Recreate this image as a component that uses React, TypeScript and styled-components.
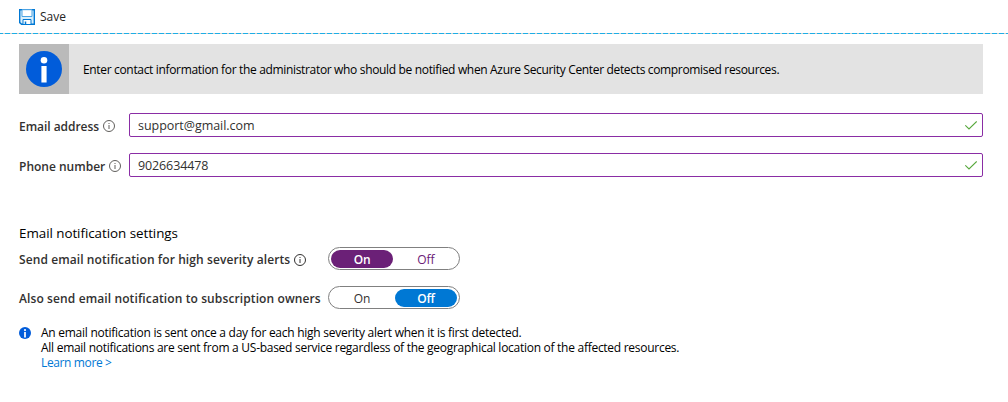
import React from 'react';
import styled, { createGlobalStyle } from 'styled-components';

const GlobalStyle = createGlobalStyle`
  body {
    margin: 0;
    background: #fff;
    color: #000;
    font-family: 'Segoe UI', 'Open Sans', 'Noto Sans', sans-serif;
    font-size: 12px;
  }
`;

const Page = styled.div`
  height: 402px;
  overflow: hidden;
`;

const Toolbar = styled.div`
  height: 33px;
  display: flex;
  align-items: center;
  gap: 5px;
  padding-left: 19px;
  box-sizing: border-box;
  color: #252525;
`;

const ToolbarRule = styled.div`
  height: 1px;
  background: repeating-linear-gradient(90deg, #1eaee6 0 3px, #d8d0cc 3px 5px, #1eaee6 5px 7px);
`;

const Content = styled.main`
  padding: 10px 25px 0 19px;
`;

const Text = styled.span<{ $spacing?: number; $size?: number }>`
  white-space: nowrap;
  font-size: ${(p) => (p.$size ? `${p.$size}px` : 'inherit')};
  letter-spacing: ${(p) => p.$spacing ?? 0}px;
`;

const Banner = styled.section`
  display: flex;
  align-items: center;
  height: 50px;
  background: #e3e3e3;
`;

const BannerIcon = styled.div`
  width: 50px;
  height: 50px;
  margin-right: 14px;
  display: flex;
  align-items: center;
  justify-content: center;
  background: #bababa;
`;

const Fields = styled.div`
  display: grid;
  gap: 16px;
  margin-top: 19px;
`;

const Field = styled.div`
  display: grid;
  grid-template-columns: 110px 1fr;
  align-items: center;
`;

const Label = styled.label`
  display: flex;
  align-items: center;
  gap: 4px;
  padding-top: 2px;
  font-weight: 600;
  color: #323130;
`;

const InputBox = styled.div`
  height: 24px;
  box-sizing: border-box;
  display: flex;
  align-items: center;
  justify-content: space-between;
  padding: 0 5px 0 8px;
  border: 1px solid #8a2da5;
  border-radius: 2px;
  color: #323130;
`;

const Heading = styled.h2`
  margin: 46px 0 0;
  font-size: 13.4px;
  line-height: 20px;
  font-weight: 400;
`;

const Setting = styled.div<{ $top: number }>`
  display: grid;
  grid-template-columns: 309px 132px;
  align-items: center;
  margin-top: ${(p) => p.$top}px;
`;

const Toggle = styled.div<{ $color: string }>`
  box-sizing: border-box;
  height: 23px;
  display: grid;
  grid-template-columns: 62px 62px;
  gap: 2px;
  padding: 2px;
  border: 1px solid #808080;
  border-radius: 12px;
  color: ${(p) => p.$color};
`;

const Option = styled.div<{ $fill?: string }>`
  display: flex;
  align-items: center;
  justify-content: center;
  padding-top: 1px;
  border-radius: 9px;
  font-weight: ${(p) => (p.$fill ? 600 : 400)};
  letter-spacing: ${(p) => (p.$fill ? -0.2 : 0)}px;
  background: ${(p) => p.$fill ?? 'transparent'};
  color: ${(p) => (p.$fill ? '#fff' : 'inherit')};
`;

const Note = styled.div`
  display: flex;
  gap: 10px;
  margin-top: 16px;
  line-height: 15px;
  > svg { margin-top: 2px; }
`;

const NoteLines = styled.div`
  display: flex;
  flex-direction: column;
  align-items: flex-start;
`;

const Link = styled.a`
  color: #0078d4;
`;

const SaveIcon = () => (
  <svg width="16" height="16" viewBox="0 0 16 16" fill="none">
    <path d="M.7.7h14.6v14.6H2.6L.7 13.6Z" fill="#d9effc" stroke="#0078d4" strokeWidth="1.4" />
    <path d="M3 .7h10v6.8H3Z" fill="#fff" stroke="#4ba3e3" />
    <path d="M4 15v-4.5h8V15" fill="#fff" stroke="#0078d4" />
    <path d="M6.5 12.5v2.5" stroke="#0078d4" strokeWidth="1.5" />
  </svg>
);

const InfoBadge = ({ size }: { size: number }) => (
  <svg width={size} height={size} viewBox="0 0 36 36">
    <circle cx="18" cy="18" r="18" fill="#015cda" />
    <circle cx="18" cy="9.3" r="3.3" fill="#fff" />
    <path d="M15.4 15h5.2v16.5h-5.2Z" fill="#fff" />
  </svg>
);

const InfoOutline = ({ color = '#605e5c' }: { color?: string }) => (
  <svg width="12" height="12" viewBox="0 0 12 12" fill="none" stroke={color}>
    <circle cx="6" cy="6" r="5.5" />
    <path d="M6 5v4M6 3v1" />
  </svg>
);

const Check = () => (
  <svg width="12" height="9" viewBox="0 0 12 9" fill="none" stroke="#57a83c" strokeWidth="1.1">
    <path d="M.3 4.3 4 8 11.7.5" />
  </svg>
);

export default function App() {
  return (
    <Page>
      <GlobalStyle />
      <Toolbar>
        <SaveIcon />
        <Text>Save</Text>
      </Toolbar>
      <ToolbarRule />
      <Content>
        <Banner>
          <BannerIcon><InfoBadge size={36} /></BannerIcon>
          <Text $spacing={-0.335}>Enter contact information for the administrator who should be notified when Azure Security Center detects compromised resources.</Text>
        </Banner>
        <Fields>
          <Field>
            <Label><Text $spacing={-0.04}>Email address</Text><InfoOutline /></Label>
            <InputBox><Text $size={12.5} $spacing={-0.04}>support@gmail.com</Text><Check /></InputBox>
          </Field>
          <Field>
            <Label><Text>Phone number</Text><InfoOutline /></Label>
            <InputBox><Text $size={12.5} $spacing={-0.12}>9026634478</Text><Check /></InputBox>
          </Field>
        </Fields>
        <Heading><Text $spacing={-0.05}>Email notification settings</Text></Heading>
        <Setting $top={4}>
          <Label><Text $spacing={0.09}>Send email notification for high severity alerts</Text><InfoOutline color="#323130" /></Label>
          <Toggle $color="#6b2077"><Option $fill="#6b2077">On</Option><Option>Off</Option></Toggle>
        </Setting>
        <Setting $top={16}>
          <Label><Text $spacing={0.11}>Also send email notification to subscription owners</Text></Label>
          <Toggle $color="#323130"><Option>On</Option><Option $fill="#0078d4">Off</Option></Toggle>
        </Setting>
        <Note>
          <InfoBadge size={12} />
          <NoteLines>
            <Text $spacing={-0.26}>An email notification is sent once a day for each high severity alert when it is first detected.</Text>
            <Text $spacing={-0.275}>All email notifications are sent from a US-based service regardless of the geographical location of the affected resources.</Text>
            <Link><Text $spacing={-0.37}>Learn more &gt;</Text></Link>
          </NoteLines>
        </Note>
      </Content>
    </Page>
  );
}
